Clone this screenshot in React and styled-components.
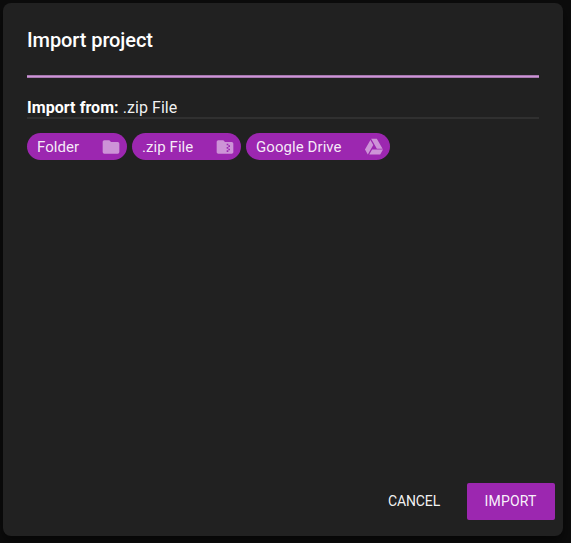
import React from 'react';
import styled, { createGlobalStyle } from 'styled-components';

const GlobalStyle = createGlobalStyle`
  *, *::before, *::after { box-sizing: border-box; }
  body {
    margin: 0;
    background: #0c0c0c;
    color: #fff;
    font-family: Roboto, "Liberation Sans", sans-serif;
    overflow: hidden;
  }
`;

const Backdrop = styled.div`
  height: 543px;
  padding: 3.4px 8px 7.5px 3px;
`;

const Dialog = styled.section`
  height: 100%;
  display: flex;
  flex-direction: column;
  background: #212121;
  border-radius: 8px;
  box-shadow: 0 6px 12px rgba(0, 0, 0, 0.5);
`;

const Title = styled.h1`
  margin: 0;
  padding: 20.6px 24px 0;
  height: 71.6px;
  font-size: 20px;
  line-height: 32px;
  font-weight: 500;
  letter-spacing: -0.09px;
`;

const Body = styled.div`
  flex: 1;
  padding: 0 24px;
`;

const Accent = styled.div`
  height: 3px;
  background: #ce93d8;
  border: solid #a578ad;
  border-width: 1px 0;
`;

const Source = styled.div`
  margin-top: 17px;
  height: 24px;
  padding-top: 3px;
  border-bottom: 2px solid #303030;
  font-size: 16px;
  line-height: 20px;
  letter-spacing: 0.06px;
  color: rgba(255, 255, 255, 0.95);

  strong {
    color: #fff;
  }
`;

const Chips = styled.div`
  display: flex;
  gap: 5px;
  padding-top: 14.4px;
`;

const Chip = styled.button`
  width: ${({ $width }) => $width}px;
  height: 26.4px;
  display: flex;
  align-items: center;
  justify-content: space-between;
  padding: 0 6px 0 10px;
  border: 0;
  border-radius: 14px;
  background: #9c27b0;
  color: rgba(255, 255, 255, 0.92);
  font: 400 15px/20px Roboto, sans-serif;
  letter-spacing: 0.07px;
  white-space: nowrap;
`;

const Icon = styled.svg`
  width: 20px;
  height: 20px;
  margin-top: 1px;
  flex: none;
  fill: #cd93d7;
`;

const Actions = styled.footer`
  display: flex;
  justify-content: flex-end;
  gap: 8px;
  padding: 0 8px 16px;
`;

const Button = styled.button`
  width: ${({ $width }) => $width}px;
  height: 36.2px;
  padding: 0;
  border: 0;
  border-radius: 2px;
  background: ${({ $primary }) => ($primary ? '#9c27b0' : 'transparent')};
  color: rgba(255, 255, 255, 0.96);
  font: 400 14px/36px Roboto, sans-serif;
  letter-spacing: ${({ $primary }) => ($primary ? '0.15px' : '-0.1px')};
  text-indent: -1px;
  text-transform: uppercase;
`;

const sources = [
  {
    label: 'Folder',
    width: 100,
    path: 'M10,4H4C2.89,4 2,4.89 2,6V18A2,2 0 0,0 4,20H20A2,2 0 0,0 22,18V8C22,6.89 21.1,6 20,6H12L10,4Z',
  },
  {
    label: '.zip File',
    width: 109,
    path: 'M20 6H12L10 4H4C2.9 4 2 4.9 2 6V18C2 19.1 2.9 20 4 20H20C21.1 20 22 19.1 22 18V8C22 6.9 21.1 6 20 6M18 12H16V14H18V16H16V18H14V16H16V14H14V12H16V10H14V8H16V10H18V12Z',
  },
  {
    label: 'Google Drive',
    width: 144,
    path: 'M7.71,3.5L1.15,15L4.58,21L11.13,9.5M9.73,15L6.3,21H19.42L22.85,15M22.28,14L15.42,2H8.58L8.57,2L15.43,14H22.28Z',
  },
];

export default function App() {
  return (
    <Backdrop>
      <GlobalStyle />
      <Dialog role="dialog" aria-label="Import project">
        <Title>Import project</Title>
        <Body>
          <Accent />
          <Source>
            <strong>Import from:</strong> .zip File
          </Source>
          <Chips>
            {sources.map(({ label, width, path }) => (
              <Chip key={label} $width={width}>
                {label}
                <Icon viewBox="0 0 24 24" aria-hidden="true">
                  <path d={path} />
                </Icon>
              </Chip>
            ))}
          </Chips>
        </Body>
        <Actions>
          <Button $width={89}>Cancel</Button>
          <Button $width={88} $primary>
            Import
          </Button>
        </Actions>
      </Dialog>
    </Backdrop>
  );
}
